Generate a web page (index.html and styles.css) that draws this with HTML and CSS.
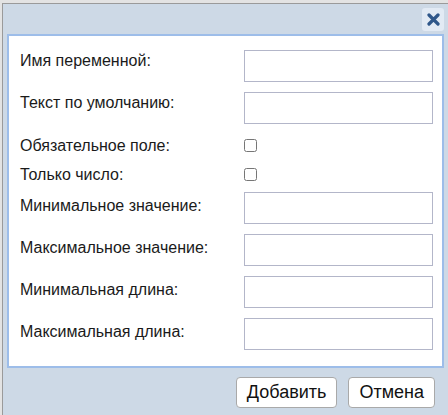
FILE: index.html
```html
<!DOCTYPE html>
<html lang="ru">
<head>
<meta charset="utf-8">
<title>Переменная</title>
<link rel="stylesheet" href="styles.css">
</head>
<body>
<div class="dialog">
  <div class="dialog-header">
    <button class="close-btn" type="button" aria-label="Закрыть">
      <svg width="13" height="13" viewBox="0 0 13 13">
        <path d="M2 2 L11 11 M11 2 L2 11" stroke="#2f578a" stroke-width="3.2" stroke-linecap="round" fill="none"/>
      </svg>
    </button>
  </div>
  <form class="panel">
    <div class="row field">
      <label class="label raised" for="v-name">Имя переменной:</label>
      <input class="text-input" id="v-name" type="text">
    </div>
    <div class="row field">
      <label class="label raised" for="v-default">Текст по умолчанию:</label>
      <input class="text-input" id="v-default" type="text">
    </div>
    <div class="row check">
      <label class="label" for="v-required">Обязательное поле:</label>
      <input class="checkbox" id="v-required" type="checkbox">
    </div>
    <div class="row check">
      <label class="label" for="v-number">Только число:</label>
      <input class="checkbox" id="v-number" type="checkbox">
    </div>
    <div class="row field">
      <label class="label lifted" for="v-min">Минимальное значение:</label>
      <input class="text-input" id="v-min" type="text">
    </div>
    <div class="row field">
      <label class="label lifted" for="v-max">Максимальное значение:</label>
      <input class="text-input" id="v-max" type="text">
    </div>
    <div class="row field">
      <label class="label lifted" for="v-minlen">Минимальная длина:</label>
      <input class="text-input" id="v-minlen" type="text">
    </div>
    <div class="row field">
      <label class="label lifted" for="v-maxlen">Максимальная длина:</label>
      <input class="text-input" id="v-maxlen" type="text">
    </div>
  </form>
  <div class="dialog-footer">
    <button class="btn" type="button">Добавить</button>
    <button class="btn" type="button">Отмена</button>
  </div>
</div>
</body>
</html>
```

FILE: styles.css
```css
html, body {
  margin: 0;
  padding: 0;
  height: 100%;
  overflow: hidden;
}

body {
  background: #e3e3e3;
  font-family: "Liberation Sans", Arial, sans-serif;
  color: #1a1a1a;
}

/* the window runs on past the right and bottom edges */
.dialog {
  box-sizing: border-box;
  width: 447px;
  height: 412px;
  margin: 3px 0 0 2px;
  border: 1px solid #9a9a9a;
  border-bottom: none;
  background: #cdd9e6;
  padding: 0 4px;
}

.dialog-header {
  height: 30px;
  display: flex;
  justify-content: flex-end;
  align-items: flex-start;
}

.close-btn {
  margin-top: 4px;
  width: 22px;
  height: 23px;
  padding: 0;
  border: none;
  border-radius: 3px;
  background: #e2eaf4;
  display: flex;
  align-items: center;
  justify-content: center;
}

.panel {
  box-sizing: border-box;
  height: 334px;
  margin: 0;
  border: 2px solid #9dbde9;
  background: #fff;
  padding: 14px 9px 0 11px;
  display: flex;
  flex-direction: column;
  gap: 10px;
}

.row {
  display: flex;
  align-items: center;
  justify-content: space-between;
}

.row.field {
  height: 32px;
}

.row.check {
  height: 15px;
  margin-top: 4px;
}

.label {
  font-size: 16px;
  line-height: 18px;
}

.label.raised {
  padding-bottom: 10px;
}

.label.lifted {
  padding-bottom: 5px;
}

.text-input {
  box-sizing: border-box;
  width: 189px;
  height: 32px;
  margin: 0;
  border: 1px solid #b3b6c9;
  border-radius: 0;
  background: #fff;
  outline: none;
}

.checkbox {
  width: 13px;
  height: 13px;
  margin: 0 176px 0 0;
}

.dialog-footer {
  display: flex;
  justify-content: flex-end;
  gap: 11px;
  padding: 9px 9px 0 0;
}

.btn {
  box-sizing: border-box;
  height: 31px;
  padding: 0 10px;
  border: 1px solid #a9a9a9;
  border-radius: 4px;
  background: #fff;
  font-family: "Liberation Sans", Arial, sans-serif;
  font-size: 18px;
  color: #111;
}
```
